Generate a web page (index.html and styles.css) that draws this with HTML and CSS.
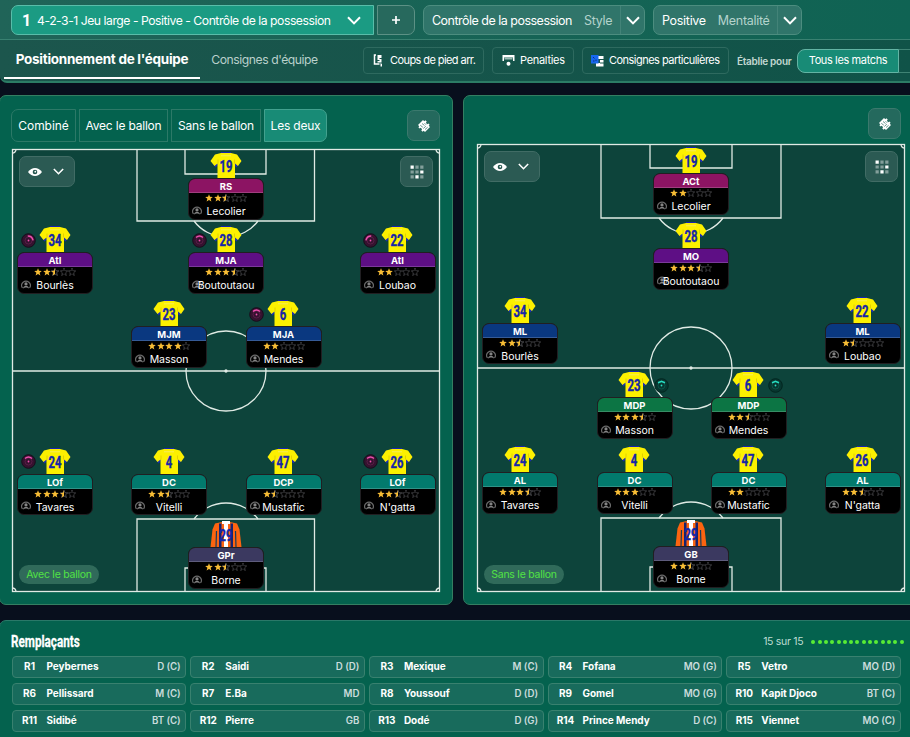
FILE: index.html
```html
<!DOCTYPE html>
<html lang="fr">
<head>
<meta charset="utf-8">
<title>Tactique</title>
<link rel="stylesheet" href="styles.css">
</head>
<body>
<svg class="defs" aria-hidden="true">
  <symbol id="chev" viewBox="0 0 14 9"><path d="M1 1.2 7 7.4 13 1.2" fill="none" stroke="#fff" stroke-width="2"/></symbol>
  <symbol id="eye" viewBox="0 0 14 8"><path d="M0 4C2 1.200 4.500 0 7 0s5 1.200 7 4c-2 2.800-4.500 4-7 4S2 6.800 0 4Z" fill="#fff"/><circle cx="7" cy="4" r="2.300" fill="#23544c"/><circle cx="7.300" cy="3.700" r=".9" fill="#fff"/></symbol>
  <symbol id="grid" viewBox="0 0 13 13"><g fill="#fff"><path fill-opacity=".42" d="M5 .5h3v3H5zM9.500.5h3v3h-3zM.5 5h3v3h-3zM5 5h3v3H5zM.5 9.500h3v3h-3zM9.500 9.500h3v3h-3z"/><path d="M.5.5h3v3h-3zM9.500 5h3v3h-3zM5 9.500h3v3H5z"/></g></symbol>
  <symbol id="tac" viewBox="0 0 14 14"><path fill="#fff" d="M6 1 7.300 2.300 8.400 1.300 9.800 2.700 8.800 3.800 10.300 5.300 11.400 4.500 12.600 5.700 11.700 6.800 13 8.100 8 13 6.700 11.700 5.600 12.700 4.200 11.300 5.200 10.200 3.700 8.700 2.600 9.500 1.400 8.300 2.300 7.200 1 6z"/><path d="M3.300 6.300 5.800 8.200M5 4.500 7.500 6.500M6.300 9.500 8.800 7.200M8 10.500 10.600 8.300M7.500 4.200 9 5.700" fill="none" stroke="#25695d" stroke-width=".7"/></symbol>
  <symbol id="face" viewBox="0 0 10 9"><path d="M1.500 8A4.300 4.300 0 1 1 8.500 8" fill="none" stroke="#6a6a6a" stroke-width="1.200"/><circle cx="5" cy="3.900" r="1.600" fill="#858585"/><path d="M2 8.500C2.300 6.500 3.500 6 5 6s2.700.5 3 2.500L6 7.500H4Z" fill="#858585"/></symbol>
  <symbol id="shirt" viewBox="0 0 32 26"><path d="M11 1.500h10V0H11z" fill="#1724b0"/><path d="M.5 8.500 5.500 15.500l3-3V6zM31.500 8.500 26.500 15.500l-3-3V6z" fill="#1b2db4"/><path d="M11 1h10l6 1.500L31.500 9 28 14l-3-2.500V26H7.500V11.500L4.500 14 .5 9 5 2.500z" fill="#fcf000"/><path d="M11 3.800h10" stroke="#f6ee70" stroke-width=".8"/><path d="M8 7.500v4M24.500 7.500v4" stroke="#dcc900" stroke-width=".8"/></symbol>
  <symbol id="keeper" viewBox="0 0 32 26"><path d="M12 1h8l7 1.500 2.500 6L31.500 26H.5L2.500 8.500l2.500-6z" fill="#fc6410"/><path d="M9 2.500h2.500V26H9zM20.500 2.500H23V26h-2.500z" fill="#17236e"/><path d="M12 0h8v3h-2v23h-4V3h-2z" fill="#fff"/><path d="M6.500 10 6 26M25.500 10l.5 16" stroke="#173c58" stroke-width="1.200"/></symbol>
  <symbol id="star" viewBox="0 0 8 8"><path d="m4 .2 1 2.600 2.800.1L5.600 4.700l.8 2.800L4 5.900 1.600 7.500l.8-2.800L.2 2.900 3 2.800Z"/></symbol>
</svg>

<header class="top">
  <div class="row-a">
    <div class="preset"><b>1</b><span class="preset-name">4-2-3-1 Jeu large - Positive - Contrôle de la possession</span><svg class="chev"><use href="#chev"/></svg></div>
    <div class="plus"><svg viewBox="0 0 10 10"><path d="M5 1v8M1 5h8" stroke="#fff" stroke-width="1.700"/></svg></div>
    <div class="combo style"><span class="val">Contrôle de la possession</span><span class="kind">Style</span><i><svg class="chev"><use href="#chev"/></svg></i></div>
    <div class="combo mentality"><span class="val">Positive</span><span class="kind">Mentalité</span><i><svg class="chev"><use href="#chev"/></svg></i></div>
  </div>
  <div class="row-b">
    <div class="tab active"><span>Positionnement de l'équipe</span></div>
    <div class="tab other"><span>Consignes d'équipe</span></div>
    <div class="tool t1"><svg viewBox="0 0 12 13"><path d="M3.500 1H2v9h5" fill="none" stroke="#fff" stroke-width="1.500"/><path d="M5 1h4v3H7v1h2v3.500H5V7h2V6H5zM8 9l1.500 1v2.500H8z" fill="#fff"/></svg><span>Coups de pied arr.</span></div>
    <div class="tool t2"><svg viewBox="0 0 12 13"><path d="M0 1h12v6h-1.500V3.500h-9V7H0z" fill="#fff"/><path d="M2 3.500h8v2H2z" fill="#9bbcb5"/><circle cx="6" cy="9.800" r="2" fill="#fff"/></svg><span>Penalties</span></div>
    <div class="tool t3"><svg viewBox="0 0 13 13"><path d="M7 2h5.500v3H9v1h3.500v2.500H9v1h3.500V12.500H5V9h4V5H7z" fill="#fff"/><path d="M0 1h7.500v8.500H0z" fill="#1769ee"/><path d="m2 3 1.500 1.500M5 5.500v1.500M2 7h1.500" stroke="#0b2f86"/></svg><span>Consignes particulières</span></div>
    <span class="for">Établie pour</span>
    <div class="matches"><span>Tous les matchs</span></div>
    <div class="matches-rest"></div>
  </div>
</header>

<main class="boards">
  <section class="panel first">
    <div class="bar">
      <div class="views"><span class="v1">Combiné</span><span class="v2">Avec le ballon</span><span class="v3">Sans le ballon</span><span class="v4 on">Les deux</span></div>
      <div class="sq"><svg><use href="#tac"/></svg></div>
    </div>
    <div class="pitch" id="with"></div>
  </section>
  <section class="panel second">
    <div class="bar"><div class="sq"><svg><use href="#tac"/></svg></div></div>
    <div class="pitch" id="without"></div>
  </section>
</main>

<section class="subs">
  <div class="subs-head"><h2>Remplaçants</h2><span class="count">15 sur 15</span><div class="dots" id="dots"></div></div>
  <div class="sub-grid" id="subs"></div>
</section>
<script src="app.js"></script>
</body>
</html>
```
FILE: styles.css
```css
* { box-sizing: border-box; }
body { margin: 0; width: 910px; height: 737px; overflow: hidden; background: #080f1d; color: #fff; font-family: Inter, "Liberation Sans", sans-serif; display: flex; flex-direction: column; }
.defs { display: none; }
span { white-space: nowrap; }

.top { height: 83px; flex: none; background: linear-gradient(90deg, #1c564d, #105348); border-bottom: 2px solid #2c7c65; border-radius: 0 0 0 7px; }
.row-a { height: 40px; padding: 5px 0 0 11px; display: flex; background: linear-gradient(90deg, #206458, #0f6353); border-bottom: 1px solid #398171; font-size: 12.500px; }
.preset { width: 363px; height: 30px; background: #1b9b83; border: 1px solid #59bda9; border-radius: 7px 0 0 7px; display: flex; align-items: center; padding: 0 12px 0 10px; }
.preset b { font: bold 16px "Liberation Sans Narrow", Roboto, sans-serif; width: 15px; }
.preset-name { flex: 1; font-size: 12.200px; letter-spacing: -.47px; }
.chev { width: 14px; height: 9px; display: block; }
.plus { width: 38px; height: 30px; margin-left: 3px; border: 1px solid #5c9185; border-radius: 0 7px 7px 0; background: #27695d; display: grid; place-items: center; }
.plus svg { width: 10px; height: 10px; }
.combo { height: 30px; margin-left: 8px; border: 1px solid #4c8d7f; border-radius: 7px; background: #30756a; display: flex; align-items: center; padding-left: 8px; }
.style { width: 222px; }
.mentality { width: 149px; }
.combo .kind { margin-left: 12px; color: #b4d3cc; letter-spacing: -.3px; }
.style .val { letter-spacing: -.51px; }
.mentality .val { letter-spacing: -.3px; }
.combo i { margin-left: auto; width: 24px; height: 28px; border-left: 1px solid #438378; display: grid; place-items: center; }

.row-b { height: 41px; display: flex; align-items: center; padding-left: 4px; }
.tab { height: 39px; align-self: flex-start; display: flex; justify-content: center; align-items: center; }
.active { width: 196px; font-weight: 700; font-size: 13.500px; border-bottom: 2px solid #fff; letter-spacing: -.27px; }
.other { width: 129px; color: #b9d0cb; font-size: 12.200px; letter-spacing: -.46px; }
.tool { height: 27px; border: 1px solid #2e6a5f; border-radius: 4px; display: flex; align-items: center; font-size: 11px; letter-spacing: -.3px; padding-left: 9px; }
.tool svg { width: 13px; height: 13px; margin-right: 5px; }
.tool span, .matches span { margin-top: -1px; }
.t1 { margin-left: 34px; width: 121px; letter-spacing: -.58px; padding-left: 8px; }
.t2 { margin-left: 8px; width: 82px; }
.t3 { margin-left: 8px; width: 147px; padding-left: 8px; letter-spacing: -.52px; }
.for { margin-left: 8px; width: 60px; font-size: 10px; font-weight: 600; color: #c3d8d2; letter-spacing: -.27px; }
.matches { width: 102px; height: 24px; background: #188b76; border: 1px solid #63b4a4; border-radius: 8px 0 0 8px; display: grid; place-items: center; font-size: 11px; letter-spacing: -.38px; }
.matches-rest { flex: 1; height: 24px; border: solid #3f8374; border-width: 1px 0; }

.boards { height: 510px; margin-top: 12px; flex: none; display: flex; gap: 10px; }
.panel { background: #04624e; border: 1.500px solid #347f62; border-radius: 7px; overflow: hidden; flex: none; }
.first { width: 454px; margin-left: -1px; padding: 13px 12px 0; }
.second { width: 460px; padding: 12px 0 0 13px; }
.bar { display: flex; justify-content: space-between; align-items: flex-start; }
.first .bar { height: 40px; }
.second .bar { height: 36px; justify-content: flex-end; width: 424px; }
.views { display: flex; gap: 3px; margin-left: -1px; }
.views span { height: 33px; border: 1px solid #2c7967; display: grid; place-items: center; font-size: 12px; letter-spacing: -.2px; }
.views .v1 { width: 65px; border-radius: 7px 0 0 7px; letter-spacing: -.05px; }
.views .v2 { width: 89px; }
.views .v3 { width: 90px; }
.views .v4 { width: 63px; border-radius: 0 7px 7px 0; background: #188b76; border-color: #42a18e; }
.sq { width: 33px; height: 31px; border: 1px solid #3b796d; border-radius: 7px; background: #24695d; display: grid; place-items: center; }
.sq svg { width: 14px; height: 14px; }
.bar .sq { margin-top: 1px; }
.second .bar .sq { margin-top: 0; }

.pitch { position: relative; width: 428px; background: #0d443b; }
#with { height: 443px; }
#without { height: 448px; }
.lines { position: absolute; inset: 0; width: 100%; height: 100%; overflow: visible; fill: none; stroke: #e0ebe5; stroke-width: 1.300; }
.pitch-tools { position: absolute; left: 7px; right: 7px; top: 7px; display: flex; justify-content: space-between; }
.pitch-tools .sq { background: #2b5a53; border-color: #416c65; }
.pitch-tools .look { width: 56px; display: flex; align-items: center; gap: 11px; padding-left: 8px; }
.look .eye { width: 14px; height: 8px; }
.look .small { width: 11px; height: 7px; }
.phase { position: absolute; left: 7px; bottom: 8px; width: 80px; height: 19px; border-radius: 10px; background: #306a5a; color: #52e344; display: grid; place-items: center; font-size: 10.500px; letter-spacing: -.25px; }
.player { position: absolute; width: 76px; margin-left: -38.500px; margin-top: -26px; display: flex; flex-direction: column; align-items: center; }
.kit { width: 32px; height: 26px; display: block; margin-left: -1px; }
.kit text { font: bold 16.500px Roboto, sans-serif; fill: #1526a8; stroke: #1526a8; stroke-width: .4px; text-anchor: middle; }
.card { width: 76px; height: 41.500px; border-radius: 7px; background: #000; border: 1px solid #211f22; overflow: hidden; position: relative; }
.role { height: 15px; margin: -1px -1px 0; border: 1px solid rgba(255,255,255,.18); border-radius: 7px 7px 0 0; text-align: center; font-size: 9.500px; font-weight: 700; line-height: 15px; }
.ST { background: #8c1463; } .AM { background: #5e0f85; } .CM { background: #0a3880; } .DM { background: #0c7544; } .DF { background: #027a6d; } .GK { background: #3b3960; }
.stars { height: 10px; display: flex; justify-content: center; gap: .5px; padding-top: 1px; }
.stars svg { width: 8px; height: 8px; }
.full { fill: #f8bd35; }
.void { fill: none; stroke: #66666a; stroke-width: .7; }
.who { text-align: center; font-size: 10.500px; line-height: 17px; height: 15px; letter-spacing: -.05px; position: relative; z-index: 1; }
.face { position: absolute; left: 3px; bottom: 4px; width: 10px; height: 9px; }
.duty { position: absolute; top: 6.500px; width: 15px; height: 15px; }
.duty.left { left: 3.500px; }
.duty.right { left: 57px; }

.subs { margin-top: 15px; height: 125px; margin-left: -1px; width: 920px; flex: none; background: #04624e; border: 1.500px solid #2a7868; border-radius: 7px; padding: 10px 0 0 11.500px; }
.subs-head { height: 24.500px; width: 892px; display: flex; align-items: center; }
h2 { margin: -4px auto 0 -.5px; font: bold 16px Roboto, sans-serif; width: 69px; white-space: nowrap; transform: scaleX(.73); transform-origin: left; -webkit-text-stroke: .3px #fff; }
.count { font-size: 10.500px; color: #bdddd2; letter-spacing: -.3px; margin: -4px 8px 0 0; }
.dots { display: flex; gap: 2.300px; margin-top: -3px; }
.dots i { width: 4px; height: 4px; border-radius: 50%; background: #58ec34; }
.sub-grid { display: grid; grid-template-columns: repeat(5, 174.700px); gap: 4px; row-gap: 4.500px; }
.sub { height: 22.500px; display: flex; align-items: center; background: #186b5c; border: 1.500px solid #39816f; border-radius: 4px; padding: 0 4.500px 1px 0; font-size: 10px; font-weight: 700; letter-spacing: -.05px; }
.sub .num { width: 34px; text-align: center; }
.sub .pos { margin-left: auto; font-weight: 600; font-size: 9.700px; color: #cbdcdd; }
```
FILE: app.js
```js
const field = {
  with: { h: 443, box: [125, 302.5, 72], six: [173, 254, 25], cx: 214, mid: 222, r: 40, bottom: 370, bsix: 419, label: 'Avec le ballon' },
  without: { h: 448, box: [124, 304, 74], six: [173, 255, 24], cx: 214, mid: 224, r: 41, bottom: 374, bsix: 423, label: 'Sans le ballon' }
};
// x, y of the card, role, line, number, name, stars, duty badge (angle)
const squads = {
  with: [
    [214.5, 29, 'RS', 'ST', 19, 'Lecolier', 2.5],
    [43.5, 103, 'AtI', 'AM', 34, 'Bourlès', 2.5, 40], [214.5, 103, 'MJA', 'AM', 28, 'Boutoutaou', 3.5, 0], [386, 103, 'AtI', 'AM', 22, 'Loubao', 2, -40],
    [157.5, 177, 'MJM', 'CM', 23, 'Masson', 4], [272, 177, 'MJA', 'CM', 6, 'Mendes', 2, 0],
    [43.5, 324.5, 'LOf', 'DF', 24, 'Tavares', 3.5, 0], [157.5, 324.5, 'DC', 'DF', 4, 'Vitelli', 2.5], [272, 324.5, 'DCP', 'DF', 47, 'Mustafic', 1.5], [386, 324.5, 'LOf', 'DF', 26, "N'gatta", 2.5, 0],
    [214.5, 398, 'GPr', 'GK', 29, 'Borne', 2.5]
  ],
  without: [
    [214.5, 29, 'ACt', 'ST', 19, 'Lecolier', 2], [214.5, 104, 'MO', 'AM', 28, 'Boutoutaou', 3.5],
    [43.5, 178.5, 'ML', 'CM', 34, 'Bourlès', 2.5], [386, 178.5, 'ML', 'CM', 22, 'Loubao', 1.5],
    [158, 253, 'MDP', 'DM', 23, 'Masson', 3.5, 0, 'r'], [272, 253, 'MDP', 'DM', 6, 'Mendes', 2.5, 0, 'r'],
    [43.5, 328, 'AL', 'DF', 24, 'Tavares', 3.5], [158, 328, 'DC', 'DF', 4, 'Vitelli', 3], [272, 328, 'DC', 'DF', 47, 'Mustafic', 2], [386, 328, 'AL', 'DF', 26, "N'gatta", 2.5],
    [214.5, 402, 'GB', 'GK', 29, 'Borne', 2.5]
  ]
};

function lines(f) {
  const [a, b, d] = f.box, [p, q, e] = f.six, c = f.cx;
  return `<svg class="lines"><rect x=".5" y=".5" width="427" height="${f.h - 1}"/>
  <path d="M${a} 0V${d}H${b}V0M${p} 0V${e}H${q}V0M0 ${f.mid}H428M${a} ${f.h}V${f.bottom}H${b}V${f.h}M${p} ${f.h}V${f.bsix}H${q}V${f.h}"/>
  <path d="M${c - 32} ${d}A40 40 0 0 0 ${c + 32} ${d}M${c - 32} ${f.bottom}A40 40 0 0 1 ${c + 32} ${f.bottom}"/>
  <path d="M4 0Q4 4 0 4M424 0Q424 4 428 4M0 ${f.h - 4}Q4 ${f.h - 4} 4 ${f.h}M428 ${f.h - 4}Q424 ${f.h - 4} 424 ${f.h}"/>
  <circle cx="${c}" cy="${f.mid}" r="${f.r}"/><circle cx="${c}" cy="${f.mid}" r="1" fill="#fff"/></svg>`;
}

function stars(n) {
  let out = '';
  for (let i = 0; i < 5; i++) {
    const left = n - i;
    if (left >= 1) out += '<svg class="full"><use href="#star"/></svg>';
    else if (left > 0) out += '<svg viewBox="0 0 8 8"><use class="void" href="#star"/><path class="full" d="M4 .2V5.900L1.600 7.500l.8-2.800L.2 2.900 3 2.800Z"/></svg>';
    else out += '<svg class="void"><use href="#star" stroke-dasharray="1.200 .5"/></svg>';
  }
  return out;
}

function badge(angle, right) {
  const tint = right ? '#27dcc0' : '#ef4fae', base = right ? '#07362f' : '#35122f', edge = right ? '#032620' : '#170d1c';
  const arc = right ? 'M4 4.800 7.500 3.300 11 4.800' : 'M4 4.500Q7.500 1.500 11 4.500';
  return `<svg class="duty ${right ? 'right' : 'left'}" viewBox="0 0 15 15"><circle cx="7.5" cy="7.5" r="6.800" fill="${base}" stroke="${edge}"/><circle cx="7.5" cy="7.5" r="3.500" fill="none" stroke="${tint}" stroke-opacity=".18"/><circle cx="7.5" cy="7.5" r=".9" fill="${tint}"/><path transform="rotate(${angle} 7.5 7.5)" d="${arc}" fill="none" stroke="${tint}" stroke-width="1.500"/></svg>`;
}

function player([x, y, role, line, num, name, rate, angle, side]) {
  const w = num > 9 ? 13 : 6.5;
  return `<div class="player" style="left:${x}px;top:${y}px">${angle === undefined ? '' : badge(angle, side)}
  <svg class="kit" viewBox="0 0 32 26"><use href="#${line === 'GK' ? 'keeper' : 'shirt'}"/><text x="16" y="20" textLength="${w}" lengthAdjust="spacingAndGlyphs">${num}</text></svg>
  <div class="card"><div class="role ${line}">${role}</div><div class="stars">${stars(rate)}</div><svg class="face"><use href="#face"/></svg><div class="who">${name}</div></div></div>`;
}

for (const id of ['with', 'without']) {
  document.getElementById(id).innerHTML = lines(field[id]) +
    '<div class="pitch-tools"><div class="sq look"><svg class="eye"><use href="#eye"/></svg><svg class="small"><use href="#chev"/></svg></div><div class="sq"><svg><use href="#grid"/></svg></div></div>' +
    squads[id].map(player).join('') + `<span class="phase">${field[id].label}</span>`;
}

const bench = [['Peybernes', 'D (C)'], ['Saidi', 'D (D)'], ['Mexique', 'M (C)'], ['Fofana', 'MO (G)'], ['Vetro', 'MO (D)'],
  ['Pellissard', 'M (C)'], ['E.Ba', 'MD'], ['Youssouf', 'D (D)'], ['Gomel', 'MO (G)'], ['Kapit Djoco', 'BT (C)'],
  ['Sidibé', 'BT (C)'], ['Pierre', 'GB'], ['Dodé', 'D (G)'], ['Prince Mendy', 'D (C)'], ['Viennet', 'MO (C)']];
document.getElementById('subs').innerHTML = bench.map(([n, p], i) => `<div class="sub"><span class="num">R${i + 1}</span><span>${n}</span><span class="pos">${p}</span></div>`).join('');
document.getElementById('dots').innerHTML = '<i></i>'.repeat(15);
```
